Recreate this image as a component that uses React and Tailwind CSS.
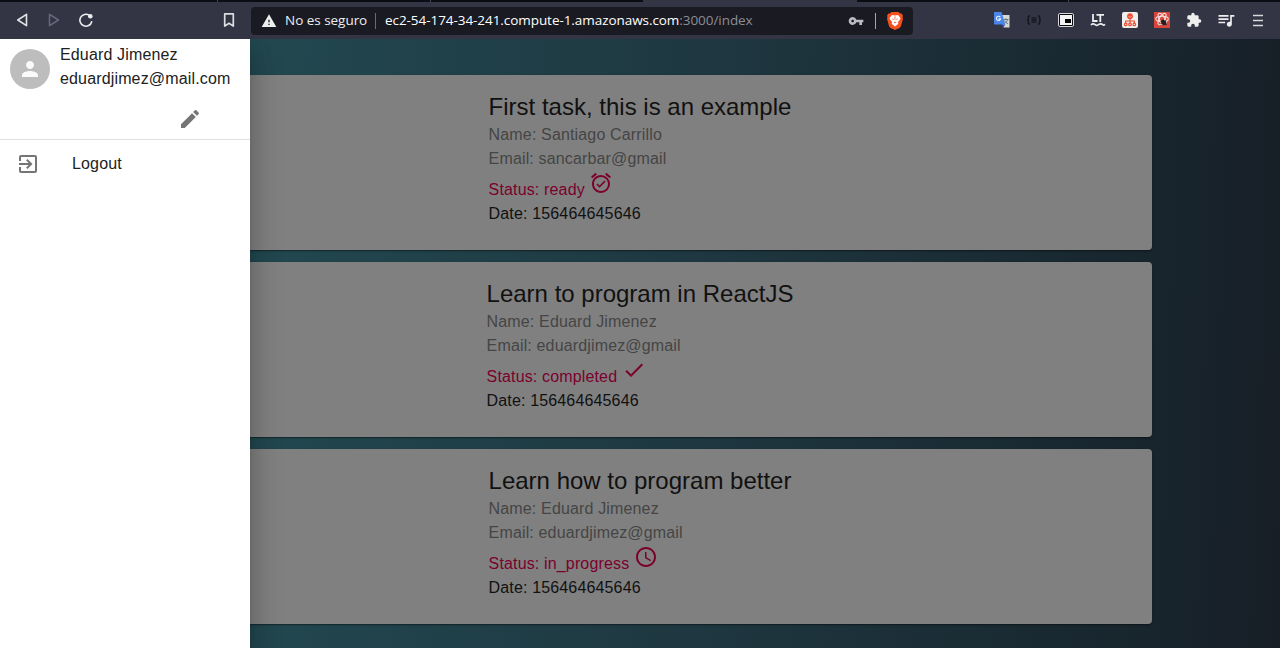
import React from "react";
import {
  MdAlarmOn,
  MdCheck,
  MdSchedule,
  MdPerson,
  MdEdit,
  MdExitToApp,
  MdWarning,
  MdVpnKey,
  MdExtension,
  MdQueueMusic,
} from "react-icons/md";

const TASKS = [
  { title: "First task, this is an example", name: "Santiago Carrillo", email: "sancarbar@gmail", status: "ready", date: "156464645646", Icon: MdAlarmOn },
  { title: "Learn to program in ReactJS", name: "Eduard Jimenez", email: "eduardjimez@gmail", status: "completed", date: "156464645646", Icon: MdCheck },
  { title: "Learn how to program better", name: "Eduard Jimenez", email: "eduardjimez@gmail", status: "in_progress", date: "156464645646", Icon: MdSchedule },
];

function TabStrip() {
  return (
    <div className="flex h-[2px] shrink-0 bg-[#0c0c14]">
      <div className="w-[218px] border-r border-[#45465a]" />
      <div className="w-[213px] border-r border-[#45465a]" />
      <div className="w-[212px]" />
      <div className="w-[214px] bg-[#333544]" />
      <div className="w-[212px] border-r border-[#45465a]" />
    </div>
  );
}

function Translate() {
  return (
    <svg className="size-4" viewBox="0 0 16 16">
      <path d="M6 3h9.5v12.6H9.5z" fill="#d6d8d6" />
      <path d="M9.5 7.5h5M12 6.3v1.2M13.6 7.5c-.5 2-1.800 3.300-3.300 4.300M10.700 8.500c.8 1.700 1.900 2.700 3.300 3.400" stroke="#687780" strokeWidth="1" fill="none" />
      <path d="M0 0h7.600l3.700 12.500H.8a.8.800 0 0 1-.8-.8z" fill="#4a86ea" />
      <path d="M7.500 12.500h3.800L9.500 15.600z" fill="#2c5fc4" />
      <path d="M6.300 5.200A2.100 2.100 0 1 0 6.600 6.800H4.600" stroke="#e8effc" strokeWidth="1.200" fill="none" />
    </svg>
  );
}

function Braces() {
  return (
    <svg className="size-4" viewBox="0 0 16 16" fill="none" stroke="#14151c" strokeWidth="1.300">
      <path d="M4 4H3.300Q2.300 4 2.300 5v2Q2.300 8 1 8q1.300 0 1.300 1v2q0 1 1 1H4M12 4h.7q1 0 1 1v2q0 1 1.300 1-1.300 0-1.300 1v2q0 1-1 1H12M5.500 5.800h5M5.500 8h5M5.500 10.200h5" />
    </svg>
  );
}

function PictureInPicture() {
  return (
    <svg className="size-4" viewBox="0 0 16 16">
      <rect x=".5" y="1.500" width="15" height="13" rx="1.500" fill="#0b0b0d" stroke="#d8d8da" />
      <rect x="2" y="3" width="12" height="10" fill="#f3f3f3" />
      <rect x="7" y="7" width="6" height="4" fill="#08080a" />
    </svg>
  );
}

function LanguageTool() {
  return (
    <svg className="size-4" viewBox="0 0 16 16" fill="none" stroke="#eeeeef" strokeWidth="1.800">
      <path d="M3 2v7h4.500M6.500 2.900H14M10.300 2.900V10" />
      <path d="M1 13q1.200-1.300 2.400-1.100 1.100.2 2.200 1t2.400 0q1.200-.8 2.400-1 1.200-.2 2.300.8 1 .8 2.300-.3" strokeWidth="1.700" />
    </svg>
  );
}

function NodeTree() {
  return (
    <svg className="size-4" viewBox="0 0 16 16">
      <rect width="16" height="16" rx="2" fill="#f1efec" />
      <circle cx="8" cy="4.200" r="2.900" fill="#ee4d31" />
      <path d="M6.500 4.600q1.500 1.200 3 0" stroke="#fbd9d2" strokeWidth=".7" fill="none" />
      <g fill="none" stroke="#ee4d31" strokeWidth="1.200">
        <path d="M8 6.500V11M3.700 11.200V9h8.600v2.200" />
        <circle cx="3.700" cy="12.400" r="1.300" />
        <circle cx="8" cy="12.400" r="1.300" />
        <circle cx="12.300" cy="12.400" r="1.300" />
      </g>
    </svg>
  );
}

function ReactBug() {
  return (
    <svg className="size-4" viewBox="0 0 16 16">
      <rect width="16" height="16" fill="#d8453b" />
      <g fill="none" stroke="#f6dfdc" strokeWidth="1.100">
        <ellipse cx="8" cy="7" rx="6.300" ry="2.700" />
        <ellipse cx="8" cy="7" rx="6.300" ry="2.700" transform="rotate(60 8 7)" />
        <ellipse cx="8" cy="7" rx="6.300" ry="2.700" transform="rotate(120 8 7)" />
      </g>
      <ellipse cx="9.700" cy="10.500" rx="2.200" ry="3.200" transform="rotate(-35 9.700 10.500)" fill="#241d1f" />
      <path d="M6.500 9.500l6.500 3M8.500 13.500l3.500-5.500M6.700 12l5.300-2.500" stroke="#241d1f" strokeWidth=".8" />
    </svg>
  );
}

function BraveLion() {
  return (
    <svg className="h-[18px] w-4" viewBox="0 0 16 18">
      <path d="M4.500 0h7l1.600 1.500 1.500-.1L16 3.800l-.5 1.500.5 1.500-2 7.200q-.4 1.200-1.500 1.900L8 18l-4.500-2.100Q2.400 15.200 2 14L0 6.800l.5-1.500L0 3.800l1.400-2.400 1.500.1z" fill="#f4511e" />
      <path d="M5 3l3 .6L11 3l2.500 2.900-.8 2-1.800 2.100.5 1.700L8 14.500l-3.400-2.800.5-1.700-1.800-2.100-.8-2z" fill="#fff" />
      <path d="M4.500 6.400l2.300.7-.5.8zM11.500 6.400l-2.300.7.5.8zM6.500 10.200L8 9.700l1.500.5L8 11.200zM7.500 4.500h1l-.3 4h-.4z" fill="#f4511e" />
    </svg>
  );
}

function BrowserBar() {
  return (
    <header className="flex h-[37px] shrink-0 items-center bg-[#333544] font-['Open_Sans',sans-serif] text-[#eeeeef]">
      <div className="flex w-[251px] items-center pb-px pl-4">
        <svg className="h-4 w-3" viewBox="0 0 12 16" fill="none" stroke="#e4e4e8" strokeWidth="1.600" strokeLinejoin="round">
          <path d="M10.500 2.300v11.400L1.800 8z" />
        </svg>
        <svg className="ml-5 h-4 w-3" viewBox="0 0 12 16" fill="none" stroke="#686a7b" strokeWidth="1.500" strokeLinejoin="round">
          <path d="M1.500 2.300v11.400L10.500 8z" />
        </svg>
        <svg className="ml-[18px] size-4" viewBox="0 0 16 16" fill="none" stroke="#ececf0" strokeWidth="1.600">
          <path d="M13.700 9.700A6 6 0 1 1 11.300 3.300" strokeLinecap="round" />
          <circle cx="12.300" cy="4.300" r="2.300" fill="#ececf0" stroke="none" />
        </svg>
        <svg className="ml-[129px] h-4 w-3" viewBox="0 0 12 16" fill="none" stroke="#dddde1" strokeWidth="1.700" strokeLinejoin="round">
          <path d="M1.700 1.900h8.600v12.200L6 11.300l-4.300 2.800z" />
        </svg>
      </div>
      <div className="flex h-7 w-[662px] items-center rounded bg-[#191a22] text-[13.500px]">
        <MdWarning className="ml-[10px] size-4 text-[#eeeeef]" />
        <span className="ml-2 w-[82px] whitespace-nowrap tracking-[-0.03px]">No es seguro</span>
        <span className="ml-2 h-4 w-px bg-[#6a6b74]" />
        <span className="ml-[9px] w-[368px] whitespace-nowrap tracking-[-0.06px] text-white">
          ec2-54-174-34-241.compute-1.amazonaws.com<span className="text-[#8c8d94]">:3000/index</span>
        </span>
        <MdVpnKey className="ml-[95px] size-4 text-[#bcbcc0]" />
        <span className="mx-[11px] h-4 w-px bg-[#a4a4aa]" />
        <BraveLion />
      </div>
      <div className="ml-[81px] flex items-center gap-4 pb-px">
        <Translate />
        <Braces />
        <PictureInPicture />
        <LanguageTool />
        <NodeTree />
        <ReactBug />
        <MdExtension className="size-4" />
        <MdQueueMusic className="-ml-0.5 size-5 shrink-0" />
        <svg className="-ml-0.5 size-4" viewBox="0 0 16 16" stroke="#d7d7dc" strokeWidth="1.700">
          <path d="M3 3.500h10M3 8.500h10M3 13.500h10" />
        </svg>
      </div>
    </header>
  );
}

function TaskCard({ task }) {
  const { Icon } = task;
  return (
    <article className="flex h-[175px] justify-center rounded bg-[#808080] pt-4 text-base leading-6 tracking-[0.15px] shadow-[0_2px_1px_-1px_rgba(0,0,0,0.3),0_1px_3px_rgba(0,0,0,0.2)]">
      <div>
        <h2 className="text-2xl leading-8 tracking-normal text-[#111]">{task.title}</h2>
        <p className="text-[#454545]">Name: {task.name}</p>
        <p className="text-[#454545]">Email: {task.email}</p>
        <p className="flex h-[31px] items-start text-[#7b002c]">
          <span className="pt-[7px]">Status: {task.status}</span>
          <Icon className="ml-[4.500px] size-6" />
        </p>
        <p className="text-[#111]">Date: {task.date}</p>
      </div>
    </article>
  );
}

function Drawer() {
  return (
    <aside className="absolute inset-y-0 left-0 w-[250px] bg-white text-base leading-6 tracking-[0.15px] text-[#212121] shadow-[0_8px_10px_-5px_rgba(0,0,0,0.2),0_16px_24px_2px_rgba(0,0,0,0.14),0_6px_30px_5px_rgba(0,0,0,0.12)]">
      <div className="flex h-[101px] flex-col border-b border-[#e0e0e0]">
        <div className="flex pl-[10px]">
          <div className="mt-[10px] flex size-10 items-center justify-center rounded-full bg-[#bdbdbd]">
            <MdPerson className="size-6 text-[#fafafa]" />
          </div>
          <div className="ml-[10px] pt-[4px]">
            <p>Eduard Jimenez</p>
            <p>eduardjimez@mail.com</p>
          </div>
        </div>
        <MdEdit className="mt-4 ml-[178px] size-6 text-[#757575]" />
      </div>
      <div className="flex h-12 items-center pl-4">
        <MdExitToApp className="size-6 text-[#757575]" />
        <span className="ml-8">Logout</span>
      </div>
    </aside>
  );
}

export default function App() {
  return (
    <div className="flex h-[648px] w-[1280px] flex-col overflow-hidden">
      <TabStrip />
      <BrowserBar />
      <main className="relative flex-1 overflow-hidden bg-[linear-gradient(92deg,#24545a_0%,#22474f_22%,#1e363f_57%,#18262e_88%,#171e26_100%)] px-32 pt-9 font-['Liberation_Sans',Arial,sans-serif]">
        <div className="flex flex-col gap-3">
          {TASKS.map((task) => (
            <TaskCard key={task.title} task={task} />
          ))}
        </div>
        <Drawer />
      </main>
    </div>
  );
}
